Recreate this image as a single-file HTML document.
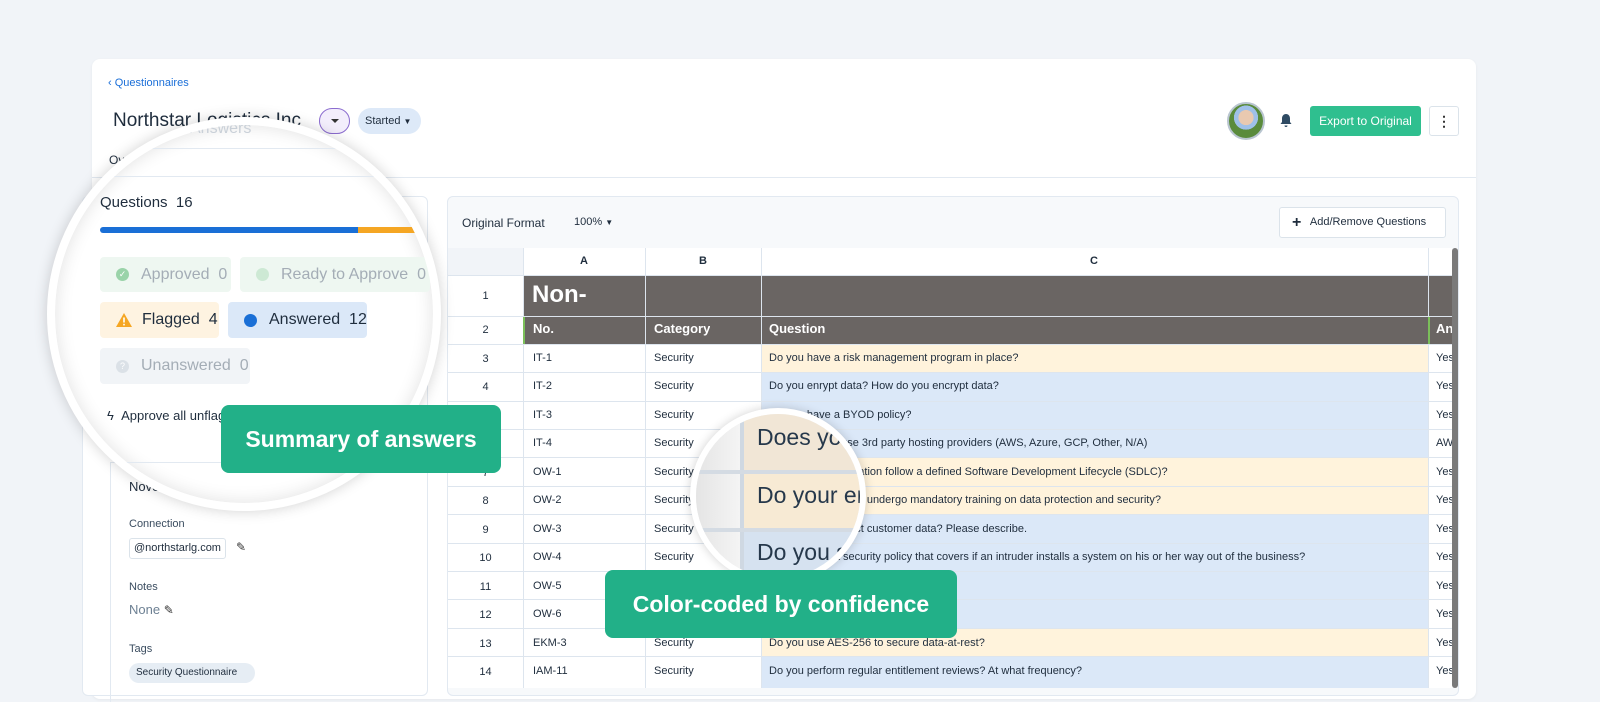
<!DOCTYPE html>
<html><head><meta charset="utf-8"><style>
*{box-sizing:border-box;margin:0;padding:0}
body{width:1600px;height:688px;overflow:hidden;background:#f1f4f8;font-family:"Liberation Sans",Arial,sans-serif;color:#1f2d3d;position:relative}
.a{position:absolute}
.card{left:92px;top:59px;width:1384px;height:640px;background:#fff;border-radius:8px;box-shadow:0 1px 3px rgba(0,0,0,.05)}
.tbl .c{position:absolute;font-size:12px;color:#1f2d3d;white-space:nowrap;overflow:hidden}
.ln{position:absolute;background:#dde5ee}
.chip{position:absolute;border-radius:4px;font-size:16px;display:flex;align-items:center;padding-left:16px}
.green{background:#22b088;color:#fff;border-radius:8px;font-size:23px;display:flex;align-items:center;justify-content:center;font-weight:bold}
</style></head><body>
<div class="a card"></div>
<div class="a" style="left:108px;top:77px;font-size:11px;color:#1b6fd8">‹ Questionnaires</div>
<div class="a" style="left:113px;top:110px;font-size:19px;color:#1f2d3d">Northstar Logistics Inc</div>
<div class="a" style="left:319px;top:108px;width:31px;height:26px;border:1px solid #8b6ccf;border-radius:13px;background:#f3eefc"></div>
<div class="a" style="left:331px;top:119px;border-left:4px solid transparent;border-right:4px solid transparent;border-top:4px solid #333"></div>
<div class="a" style="left:358px;top:108px;width:63px;height:26px;background:#dde9f8;border-radius:13px;font-size:11px;line-height:26px;padding-left:7px">Started <span style="font-size:8px">▼</span></div>
<div class="a" style="left:109px;top:153px;font-size:12px">Ov</div>
<div class="a" style="left:92px;top:177px;width:1384px;height:1px;background:#e2e9f1"></div>
<div class="a" style="left:1227px;top:102px;width:38px;height:38px;border-radius:50%;border:2px solid #b9c5d0;background:radial-gradient(circle at 50% 40%,#e9c9b0 0 28%,#9fc0e8 29% 45%,#5a8b3c 46%)"></div>
<svg class="a" style="left:1279px;top:113px" width="14" height="15" viewBox="0 0 14 15"><path d="M7 1C4.5 1 3 3 3 5.5V9L1.5 11h11L11 9V5.5C11 3 9.5 1 7 1z M5.5 12.5a1.5 1.5 0 0 0 3 0z" fill="#2f4b63"/></svg>
<div class="a" style="left:1310px;top:106px;width:111px;height:30px;background:#2fbf8f;border-radius:3px;color:#fff;font-size:12px;line-height:30px;text-align:center">Export to Original</div>
<div class="a" style="left:1429px;top:106px;width:30px;height:30px;border:1px solid #dbe3ea;border-radius:3px;font-size:14px;text-align:center;line-height:28px;font-weight:bold;color:#333">⋮</div>
<div class="a" style="left:82px;top:196px;width:346px;height:500px;border:1px solid #e2e9f1;border-radius:6px;background:#fff"></div>
<div class="a" style="left:110px;top:462px;width:318px;height:240px;border-left:1px solid #e2e9f1;border-top:1px solid #e2e9f1"></div>
<div class="a" style="left:129px;top:479px;font-size:13px">Nove</div>
<div class="a" style="left:129px;top:518px;font-size:11px;color:#3b4d60">Connection</div>
<div class="a" style="left:129px;top:538px;width:97px;height:21px;border:1px solid #dbe3ea;border-radius:3px;font-size:11px;line-height:19px;padding-left:4px">@northstarlg.com</div>
<div class="a" style="left:236px;top:540px;font-size:12px;color:#333">✎</div>
<div class="a" style="left:129px;top:581px;font-size:11px;color:#3b4d60">Notes</div>
<div class="a" style="left:129px;top:602px;font-size:13px;color:#6d8093">None <span style="color:#333;font-size:12px">✎</span></div>
<div class="a" style="left:129px;top:643px;font-size:11px;color:#3b4d60">Tags</div>
<div class="a" style="left:129px;top:663px;width:126px;height:20px;background:#e6edf4;border-radius:10px;font-size:10px;padding:4px 7px">Security Questionnaire</div>
<div class="a" style="left:447px;top:196px;width:1012px;height:500px;border:1px solid #e2e9f1;border-radius:6px;background:#f7f9fb;overflow:hidden">
<div class="a" style="left:14px;top:19px;font-size:12px">Original Format</div>
<div class="a" style="left:126px;top:19px;font-size:11px">100% <span style="font-size:8px">▼</span></div>
<div class="a" style="left:831px;top:10px;width:167px;height:31px;background:#fff;border:1px solid #dbe3ea;border-radius:3px;font-size:11px;line-height:29px;padding-left:12px"><b style="font-size:16px;vertical-align:-2px">+</b>&nbsp;&nbsp; Add/Remove Questions</div>
</div>
<div class="a tbl" style="left:448px;top:248px;width:1004px;height:440px;background:#fff;overflow:hidden">
<div class="a" style="left:0;top:0;width:75px;height:27px;background:#f1f4f8"></div>
<div class="a" style="left:75px;top:27px;width:929px;height:69px;background:#6a6563"></div>
<div class="a" style="left:313px;top:96px;width:667px;height:28px;background:#fff3dc"></div>
<div class="a" style="left:313px;top:124px;width:667px;height:85px;background:#dbe8f8"></div>
<div class="a" style="left:313px;top:209px;width:667px;height:57px;background:#fff3dc"></div>
<div class="a" style="left:313px;top:266px;width:667px;height:114px;background:#dbe8f8"></div>
<div class="a" style="left:313px;top:380px;width:667px;height:28px;background:#fff3dc"></div>
<div class="a" style="left:313px;top:408px;width:667px;height:32px;background:#dbe8f8"></div>
<div class="ln" style="left:75px;top:0;width:1px;height:440px"></div>
<div class="ln" style="left:197px;top:0;width:1px;height:440px"></div>
<div class="ln" style="left:313px;top:0;width:1px;height:440px"></div>
<div class="ln" style="left:980px;top:0;width:1px;height:440px"></div>
<div class="ln" style="left:0;top:27px;width:1004px;height:1px"></div>
<div class="ln" style="left:0;top:68px;width:1004px;height:1px"></div>
<div class="ln" style="left:0;top:96px;width:1004px;height:1px"></div>
<div class="ln" style="left:0;top:124px;width:1004px;height:1px"></div><div class="ln" style="left:0;top:153px;width:1004px;height:1px"></div><div class="ln" style="left:0;top:181px;width:1004px;height:1px"></div><div class="ln" style="left:0;top:209px;width:1004px;height:1px"></div><div class="ln" style="left:0;top:238px;width:1004px;height:1px"></div><div class="ln" style="left:0;top:266px;width:1004px;height:1px"></div><div class="ln" style="left:0;top:295px;width:1004px;height:1px"></div><div class="ln" style="left:0;top:323px;width:1004px;height:1px"></div><div class="ln" style="left:0;top:351px;width:1004px;height:1px"></div><div class="ln" style="left:0;top:380px;width:1004px;height:1px"></div><div class="ln" style="left:0;top:408px;width:1004px;height:1px"></div>
<div class="ln" style="left:75px;top:69px;width:2px;height:27px;background:#7bbf5a"></div>
<div class="ln" style="left:980px;top:69px;width:2px;height:27px;background:#7bbf5a"></div>
<div class="c" style="left:132px;top:7px;font-size:11px;font-weight:bold">A</div>
<div class="c" style="left:251px;top:7px;font-size:11px;font-weight:bold">B</div>
<div class="c" style="left:642px;top:7px;font-size:11px;font-weight:bold">C</div>
<div class="c" style="left:84px;top:33px;font-size:24px;font-weight:bold;color:#fff">Non-</div>
<div class="c" style="left:85px;top:73px;font-weight:bold;color:#fff;font-size:13px">No.</div>
<div class="c" style="left:206px;top:73px;font-weight:bold;color:#fff;font-size:13px">Category</div>
<div class="c" style="left:321px;top:73px;font-weight:bold;color:#fff;font-size:13px">Question</div>
<div class="c" style="left:988px;top:73px;font-weight:bold;color:#fff;font-size:13px">An</div>
<div class="c" style="left:0;width:75px;text-align:center;top:42px;font-size:11px">1</div>
<div class="c" style="left:0;width:75px;text-align:center;top:76px;font-size:11px">2</div>
<div id="rows"></div>
</div>
<div class="a" style="left:1452px;top:248px;width:6px;height:440px;background:#7a7a7a;border-radius:3px"></div>
<script>
var d=[["IT-1","Do you have a risk management program in place?","Yes"],["IT-2","Do you enrypt data? How do you encrypt data?","Yes"],["IT-3","Do you have a BYOD policy?","Yes"],["IT-4","Does your org use 3rd party hosting providers (AWS, Azure, GCP, Other, N/A)","AW"],["OW-1","Does your organization follow a defined Software Development Lifecycle (SDLC)?","Yes"],["OW-2","Do your employees undergo mandatory training on data protection and security?","Yes"],["OW-3","How do you protect customer data? Please describe.","Yes"],["OW-4","Do you have a security policy that covers if an intruder installs a system on his or her way out of the business?","Yes"],["OW-5","","Yes"],["OW-6","","Yes"],["EKM-3","Do you use AES-256 to secure data-at-rest?","Yes"],["IAM-11","Do you perform regular entitlement reviews? At what frequency?","Yes"]];
var h="";d.forEach(function(r,i){var t=96+i*28.45+8;h+='<div class="c" style="left:0;width:75px;text-align:center;top:'+(t+1)+'px;font-size:11px">'+(i+3)+'</div><div class="c" style="left:85px;top:'+t+'px;font-size:11px">'+r[0]+'</div><div class="c" style="left:206px;top:'+t+'px;font-size:11px">Security</div><div class="c" style="left:321px;top:'+t+'px;font-size:11px">'+r[1]+'</div><div class="c" style="left:988px;top:'+t+'px;font-size:11px">'+r[2]+'</div>';});
document.getElementById("rows").innerHTML=h;
</script>
<div class="a" style="left:47px;top:117px;width:394px;height:394px;border-radius:50%;overflow:hidden;background:#fff;border:8px solid #fff;box-shadow:0 0 14px rgba(0,0,0,.18),inset 0 0 18px rgba(0,0,0,.12)">
 <div class="a" style="left:-55px;top:-125px;width:600px;height:600px">
  <div class="a" style="left:190px;top:120px;font-size:16px;color:#c9d0d8">Answers</div>
  <div class="a" style="left:0;top:148px;width:600px;height:1px;background:#e2e9f1"></div>
  <div class="a" style="left:0;top:176px;width:600px;height:1px;background:#e2e9f1"></div>
  <div class="a" style="left:100px;top:194px;font-size:15px;color:#1f2d3d">Questions&nbsp;&nbsp;16</div>
  <div class="a" style="left:100px;top:227px;width:258px;height:6px;background:#1a6fd6;border-radius:3px 0 0 3px"></div>
  <div class="a" style="left:358px;top:227px;width:70px;height:6px;background:#f5a623"></div>
  <div class="chip" style="left:100px;top:257px;width:131px;height:35px;background:#eef7f1;color:#a4adb6"><span style="display:inline-block;width:13px;height:13px;border-radius:50%;background:#9ad3a9;color:#fff;font-size:9px;text-align:center;line-height:13px;margin-right:12px">✓</span>Approved&nbsp;&nbsp;0</div>
  <div class="chip" style="left:240px;top:257px;width:190px;height:35px;background:#eef7f1;color:#a4adb6"><span style="display:inline-block;width:13px;height:13px;border-radius:50%;background:#cde9d4;margin-right:12px"></span>Ready to Approve&nbsp;&nbsp;0</div>
  <div class="chip" style="left:100px;top:302px;width:119px;height:36px;background:#fef3e1;color:#1f2d3d"><svg width="16" height="14" viewBox="0 0 16 14" style="margin-right:10px"><path d="M8 0L16 14H0z" fill="#f5a623"/><rect x="7.2" y="4.5" width="1.6" height="5" fill="#fff"/><rect x="7.2" y="10.8" width="1.6" height="1.6" fill="#fff"/></svg>Flagged&nbsp;&nbsp;4</div>
  <div class="chip" style="left:228px;top:302px;width:139px;height:36px;background:#dbe8f8;color:#1f2d3d"><span style="display:inline-block;width:13px;height:13px;border-radius:50%;background:#1a6fd6;margin-right:12px"></span>Answered&nbsp;&nbsp;12</div>
  <div class="chip" style="left:100px;top:348px;width:150px;height:36px;background:#f1f4f7;color:#a4adb6"><span style="display:inline-block;width:13px;height:13px;border-radius:50%;background:#dbe1e7;color:#fff;font-size:9px;text-align:center;line-height:13px;margin-right:12px">?</span>Unanswered&nbsp;&nbsp;0</div>
  <div class="a" style="left:107px;top:408px;font-size:13px;color:#1f2d3d">ϟ&nbsp; Approve all unflagged</div>
  <div class="a" style="left:110px;top:462px;width:400px;height:1px;background:#e2e9f1"></div>
 </div>
</div>
<div class="a" style="left:690px;top:408px;width:176px;height:176px;border-radius:50%;overflow:hidden;background:#ededed;border:6px solid #fff;box-shadow:0 0 10px rgba(0,0,0,.18)">
 <div class="a" style="left:-698px;top:-414px;width:1000px;height:300px">
  <div class="a" style="left:690px;top:400px;width:52px;height:200px;background:linear-gradient(90deg,#e2e2e2,#f4f4f4)"></div>
  <div class="a" style="left:742px;top:400px;width:4px;height:200px;background:#cfd8e2"></div>
  <div class="a" style="left:746px;top:410px;width:130px;height:60px;background:#f1e6d6"></div>
  <div class="a" style="left:746px;top:474px;width:130px;height:54px;background:#f7ead4"></div>
  <div class="a" style="left:746px;top:532px;width:130px;height:60px;background:#d6e2f0"></div>
  <div class="a" style="left:690px;top:470px;width:200px;height:4px;background:#d4dbe3"></div>
  <div class="a" style="left:690px;top:528px;width:200px;height:4px;background:#d4dbe3"></div>
  <div class="a" style="left:759px;top:424px;font-size:23px;color:#26384b">Does your</div>
  <div class="a" style="left:759px;top:482px;font-size:23px;color:#26384b">Do your em</div>
  <div class="a" style="left:759px;top:539px;font-size:23px;color:#26384b">Do you s</div>
 </div>
</div>
<div class="a green" style="left:221px;top:405px;width:280px;height:68px">Summary of answers</div>
<div class="a green" style="left:605px;top:570px;width:352px;height:68px">Color-coded by confidence</div>
</body></html>
